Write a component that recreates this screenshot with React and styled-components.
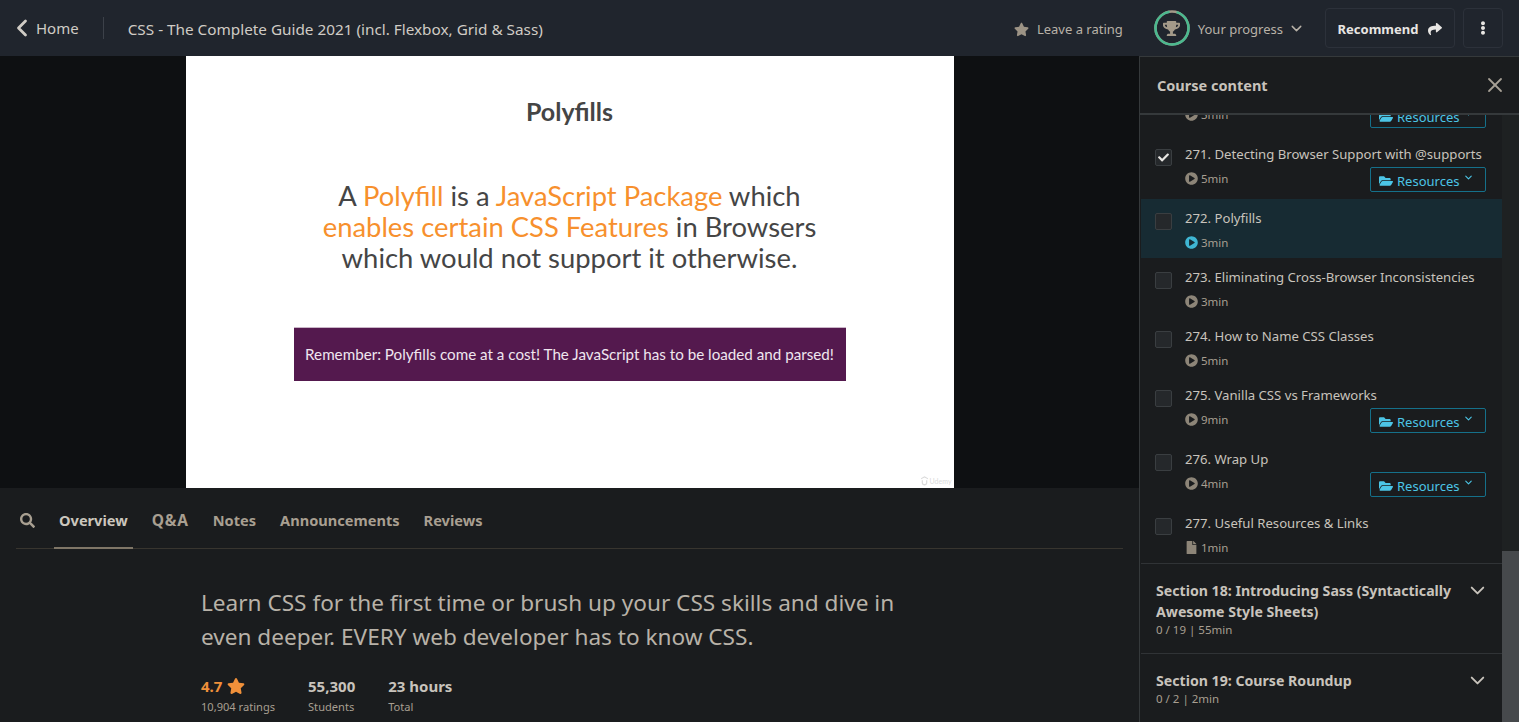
import styled, { createGlobalStyle } from "styled-components";
import { FaStar, FaTrophy, FaShare, FaEllipsisV, FaCheck, FaPlayCircle, FaFolderOpen, FaFile, FaSearch } from "react-icons/fa";
import { ChevronLeft, ChevronDown, X } from "lucide-react";

const lectures = [
    { id: 270, title: "", time: "3min", resources: true, done: false },
    { id: 271, title: "271. Detecting Browser Support with @supports", time: "5min", resources: true, done: true },
    { id: 272, title: "272. Polyfills", time: "3min", active: true },
    { id: 273, title: "273. Eliminating Cross-Browser Inconsistencies", time: "3min" },
    { id: 274, title: "274. How to Name CSS Classes", time: "5min" },
    { id: 275, title: "275. Vanilla CSS vs Frameworks", time: "9min", resources: true },
    { id: 276, title: "276. Wrap Up", time: "4min", resources: true },
    { id: 277, title: "277. Useful Resources & Links", time: "1min", file: true },
];

const GlobalStyle = createGlobalStyle`
    html, body {
        margin: 0;
        height: 722px;
        overflow: hidden;
        background: #1a1c1e;
    }
    * {
        box-sizing: border-box;
    }
`;

const App = () => {
    return (
        <Page>
            <GlobalStyle />
            <TopBar>
                <HomeLink><ChevronLeft size={28} strokeWidth={2.4} />Home</HomeLink>
                <Divider />
                <CourseTitle>CSS - The Complete Guide 2021 (incl. Flexbox, Grid &amp; Sass)</CourseTitle>
                <TopActions>
                    <Rating><FaStar size={15} color="#9c9385" />Leave a rating</Rating>
                    <Progress>
                        <Ring>
                            <svg width="36" height="36" viewBox="0 0 36 36">
                                <circle cx="18" cy="18" r="16.5" fill="none" stroke="#a49a89" strokeWidth="2.5" />
                                <circle cx="18" cy="18" r="16.5" fill="none" stroke="#4bb98f" strokeWidth="2.5" strokeDasharray="96 104" transform="rotate(-74 18 18)" />
                            </svg>
                            <TrophyIcon><FaTrophy size={17} color="#a49a89" /></TrophyIcon>
                        </Ring>
                        <ProgressLabel>Your progress</ProgressLabel>
                        <ProgressCaret><ChevronDown size={17} strokeWidth={2} /></ProgressCaret>
                    </Progress>
                    <RecommendButton>Recommend<FaShare size={14} /></RecommendButton>
                    <MoreButton><FaEllipsisV size={14} /></MoreButton>
                </TopActions>
            </TopBar>
            <Body>
                <Main>
                    <VideoArea>
                        <Slide>
                            <SlideTitle>Polyfills</SlideTitle>
                            <SlideText>
                                A <Hl>Polyfill</Hl> is a <Hl>JavaScript Package</Hl> which<br />
                                <Hl>enables certain CSS Features</Hl> in Browsers<br />
                                which would not support it otherwise.
                            </SlideText>
                            <SlideNote>Remember: Polyfills come at a cost! The JavaScript has to be loaded and parsed!</SlideNote>
                            <Watermark>
                                <svg width="7" height="10" viewBox="0 0 8 11">
                                    <path d="M4 0 L8 2.4 L8 3.6 L4 1.4 L0 3.6 L0 2.4 Z M0.8 4.5 H2.2 V7.4 C2.2 9.4 5.8 9.4 5.8 7.4 V4.5 H7.2 V7.5 C7.2 11.6 0.8 11.6 0.8 7.5 Z" fill="#dadada" />
                                </svg>
                                Udemy
                            </Watermark>
                        </Slide>
                    </VideoArea>
                    <Tabs>
                        <SearchTab><FaSearch size={15} /></SearchTab>
                        <Tab $active>Overview</Tab>
                        <QaTab>Q&amp;A</QaTab>
                        <Tab>Notes</Tab>
                        <Tab>Announcements</Tab>
                        <Tab>Reviews</Tab>
                    </Tabs>
                    <Overview>
                        <Headline>
                            Learn CSS for the first time or brush up your CSS skills and dive in
                            even deeper. EVERY web developer has to know CSS.
                        </Headline>
                        <Stats>
                            <Stat>
                                <StatValue $orange>4.7 <FaStar size={18} /></StatValue>
                                <StatLabel>10,904 ratings</StatLabel>
                            </Stat>
                            <Stat>
                                <StatValue>55,300</StatValue>
                                <StatLabel>Students</StatLabel>
                            </Stat>
                            <Stat>
                                <StatValue>23 hours</StatValue>
                                <StatLabel>Total</StatLabel>
                            </Stat>
                        </Stats>
                    </Overview>
                </Main>
                <Sidebar>
                    <SidebarHeader>
                        Course content
                        <X size={24} strokeWidth={1.8} color="#a8a196" />
                    </SidebarHeader>
                    <ScrollArea>
                        <List>
                            {lectures.map((lecture) => {
                                return (
                                    <Row key={lecture.id} $active={lecture.active} $tall={lecture.resources}>
                                        <Checkbox>{lecture.done && <FaCheck size={11} color="#e8e6e3" />}</Checkbox>
                                        <RowBody>
                                            <RowTitle>{lecture.title}</RowTitle>
                                            <RowMeta>
                                                <Duration $active={lecture.active}>
                                                    {lecture.file ? <FaFile size={13} /> : <FaPlayCircle size={13} />}
                                                    {lecture.time}
                                                </Duration>
                                                {lecture.resources && (
                                                    <ResourcesButton>
                                                        <FaFolderOpen size={14} />Resources<ResourcesCaret><ChevronDown size={11} strokeWidth={2.4} /></ResourcesCaret>
                                                    </ResourcesButton>
                                                )}
                                            </RowMeta>
                                        </RowBody>
                                    </Row>
                                );
                            })}
                            <Section>
                                <SectionText>
                                    <SectionName>Section 18: Introducing Sass (Syntactically Awesome Style Sheets)</SectionName>
                                    <SectionInfo>0 / 19 | 55min</SectionInfo>
                                </SectionText>
                                <SectionCaret><ChevronDown size={23} strokeWidth={2} /></SectionCaret>
                            </Section>
                            <Section>
                                <SectionText>
                                    <SectionName>Section 19: Course Roundup</SectionName>
                                    <SectionInfo>0 / 2 | 2min</SectionInfo>
                                </SectionText>
                                <SectionCaret><ChevronDown size={23} strokeWidth={2} /></SectionCaret>
                            </Section>
                        </List>
                        <ScrollTrack><ScrollThumb /></ScrollTrack>
                    </ScrollArea>
                </Sidebar>
            </Body>
        </Page>
    );
};

const uiFont = `"Noto Sans", "Open Sans", sans-serif`;
const slideFont = `Lato, "Open Sans", sans-serif`;

const Page = styled.div`
    width: 1519px;
    height: 722px;
    overflow: hidden;
    display: flex;
    flex-direction: column;
    font-family: ${uiFont};
    color: #c8c3bc;
`;
const TopBar = styled.div`
    height: 56px;
    flex-shrink: 0;
    display: flex;
    align-items: center;
    background: #20252d;
    padding-right: 16px;
`;
const HomeLink = styled.div`
    display: flex;
    align-items: center;
    margin-left: 8px;
    font-size: 15px;
    color: #d0ccc5;
`;
const Divider = styled.div`
    width: 1px;
    height: 22px;
    background: #3c4149;
    margin: 0 24px;
`;
const CourseTitle = styled.div`
    padding-top: 2px;
    font-size: 15.3px;
    color: #d0ccc5;
`;
const TopActions = styled.div`
    margin-left: auto;
    display: flex;
    align-items: center;
`;
const Rating = styled.div`
    display: flex;
    align-items: center;
    gap: 8px;
    padding-top: 2px;
    font-size: 13px;
    color: #b8b2a8;
`;
const Progress = styled.div`
    display: flex;
    align-items: center;
    gap: 8px;
    margin-left: 31px;
    font-size: 13px;
    color: #b8b2a8;
`;
const ProgressLabel = styled.span`
    padding-top: 2px;
`;
const ProgressCaret = styled.span`
    display: flex;
    margin: 0 -3.5px;
`;
const Ring = styled.div`
    position: relative;
    width: 36px;
    height: 36px;
`;
const TrophyIcon = styled.div`
    position: absolute;
    inset: 0;
    display: flex;
    align-items: center;
    justify-content: center;
`;
const RecommendButton = styled.div`
    display: flex;
    align-items: center;
    justify-content: center;
    gap: 10px;
    width: 130px;
    height: 40px;
    margin-left: 24px;
    padding-top: 1px;
    border: 1px solid #2c313a;
    border-radius: 4px;
    font-size: 13px;
    font-weight: 700;
    color: #e8e6e3;
`;
const MoreButton = styled.div`
    display: flex;
    align-items: center;
    justify-content: center;
    width: 40px;
    height: 40px;
    margin-left: 8px;
    border: 1px solid #2c313a;
    border-radius: 4px;
    color: #e8e6e3;
`;
const Body = styled.div`
    flex: 1;
    display: flex;
    min-height: 0;
`;
const Main = styled.div`
    width: 1139px;
    flex-shrink: 0;
    display: flex;
    flex-direction: column;
`;
const VideoArea = styled.div`
    height: 432px;
    flex-shrink: 0;
    display: flex;
    justify-content: center;
    background: #0e1012;
`;
const Slide = styled.div`
    position: relative;
    width: 768px;
    height: 432px;
    background: #fff;
    display: flex;
    flex-direction: column;
    align-items: center;
    font-family: ${slideFont};
    color: #454545;
`;
const SlideTitle = styled.div`
    margin-top: 41px;
    font-size: 25px;
    line-height: 28px;
    font-weight: 700;
`;
const SlideText = styled.div`
    margin-top: 55px;
    font-size: 27.4px;
    line-height: 31px;
    text-align: center;
`;
const Hl = styled.span`
    color: #f7902d;
`;
const SlideNote = styled.div`
    margin-top: 54px;
    width: 552px;
    height: 54px;
    padding-bottom: 2px;
    display: flex;
    align-items: center;
    justify-content: center;
    background: #54194e;
    border-top: 1px solid #c9b6c7;
    color: #efe6ee;
    font-size: 15.2px;
`;
const Watermark = styled.div`
    position: absolute;
    right: 2px;
    bottom: 2px;
    display: flex;
    align-items: center;
    gap: 2px;
    font-size: 7px;
    color: #dadada;
`;
const Tabs = styled.div`
    height: 61px;
    flex-shrink: 0;
    margin: 0 16px;
    display: flex;
    align-items: stretch;
    border-bottom: 1px solid #38352f;
`;
const SearchTab = styled.div`
    display: flex;
    align-items: center;
    padding-top: 4px;
    margin: 0 19px 0 4px;
    color: #a89f91;
`;
const Tab = styled.div`
    display: flex;
    align-items: center;
    padding: 4px 5px 0;
    margin-right: 14px;
    margin-bottom: -1px;
    font-size: 14.6px;
    font-weight: 700;
    color: ${(props) => (props.$active ? "#cbc6bd" : "#a89f91")};
    border-bottom: 2px solid ${(props) => (props.$active ? "#7f7667" : "transparent")};
`;
const QaTab = styled(Tab)`
    font-size: 15.5px;
    letter-spacing: 0.8px;
`;
const Overview = styled.div`
    padding: 37px 0 0 201px;
`;
const Headline = styled.div`
    width: 720px;
    font-size: 22.6px;
    line-height: 34px;
    color: #b8b2a8;
`;
const Stats = styled.div`
    display: flex;
    gap: 33px;
    margin-top: 22px;
`;
const Stat = styled.div`
    display: flex;
    flex-direction: column;
`;
const StatValue = styled.div`
    display: flex;
    align-items: center;
    gap: 5px;
    font-size: 15px;
    line-height: 20px;
    font-weight: 700;
    color: ${(props) => (props.$orange ? "#f0903a" : "#c8c3bc")};
`;
const StatLabel = styled.div`
    font-size: 11.1px;
    line-height: 22px;
    color: #a89f91;
`;
const Sidebar = styled.div`
    width: 380px;
    flex-shrink: 0;
    display: flex;
    flex-direction: column;
    background: #1a1c1e;
    border-left: 1px solid #35393b;
    border-top: 1px solid #35393b;
`;
const SidebarHeader = styled.div`
    height: 58px;
    flex-shrink: 0;
    display: flex;
    align-items: center;
    justify-content: space-between;
    padding: 0 12px 0 17px;
    font-size: 14.5px;
    font-weight: 700;
    color: #c8c3bc;
    border-bottom: 2px solid #35393b;
`;
const ScrollArea = styled.div`
    flex: 1;
    min-height: 0;
    display: flex;
`;
const List = styled.div`
    flex: 1;
    padding-left: 1px;
    overflow: hidden;
    & > :first-child {
        margin-top: -44px;
    }
`;
const Row = styled.div`
    height: ${(props) => (props.$tall ? "64px" : "59px")};
    display: flex;
    padding: 9px 16px 0 14px;
    background: ${(props) => (props.$active ? "#172b33" : "transparent")};
`;
const Checkbox = styled.div`
    width: 17px;
    height: 17px;
    margin: 5px 13px 0 0;
    flex-shrink: 0;
    display: flex;
    align-items: center;
    justify-content: center;
    background: #25282b;
    border: 1px solid #3a3e41;
    border-radius: 2px;
`;
const RowBody = styled.div`
    flex: 1;
    min-width: 0;
`;
const RowTitle = styled.div`
    height: 20px;
    font-size: 13.15px;
    line-height: 20px;
    white-space: nowrap;
    color: #c8c3bc;
`;
const RowMeta = styled.div`
    margin-top: 3px;
    display: flex;
    align-items: flex-start;
    justify-content: space-between;
`;
const Duration = styled.div`
    height: 22px;
    display: flex;
    align-items: center;
    gap: 3px;
    font-size: 11.5px;
    color: #a89f91;
    svg {
        color: ${(props) => (props.$active ? "#3fb6d3" : "#8d8578")};
    }
`;
const ResourcesButton = styled.div`
    width: 116px;
    height: 25px;
    padding: 2px 0 0 8px;
    display: flex;
    align-items: center;
    gap: 4px;
    border: 1px solid #15708a;
    border-radius: 2px;
    font-size: 13px;
    color: #4cc5e6;
`;
const ResourcesCaret = styled.span`
    display: flex;
    margin-bottom: 6px;
`;
const Section = styled.div`
    display: flex;
    align-items: flex-start;
    justify-content: space-between;
    padding: 16px 13px 15px 15px;
    border-top: 1px solid #303336;
`;
const SectionText = styled.div`
    width: 305px;
`;
const SectionName = styled.div`
    font-size: 14.15px;
    line-height: 21px;
    font-weight: 700;
    color: #c8c3bc;
`;
const SectionInfo = styled.div`
    font-size: 11.5px;
    line-height: 16px;
    color: #a89f91;
`;
const SectionCaret = styled.span`
    display: flex;
    margin-top: -1.5px;
    color: #c8c3bc;
`;
const ScrollTrack = styled.div`
    width: 17px;
    flex-shrink: 0;
    display: flex;
    flex-direction: column;
    justify-content: flex-end;
    background: #1e2122;
`;
const ScrollThumb = styled.div`
    height: 171px;
    background: #46494c;
`;

export default App;
